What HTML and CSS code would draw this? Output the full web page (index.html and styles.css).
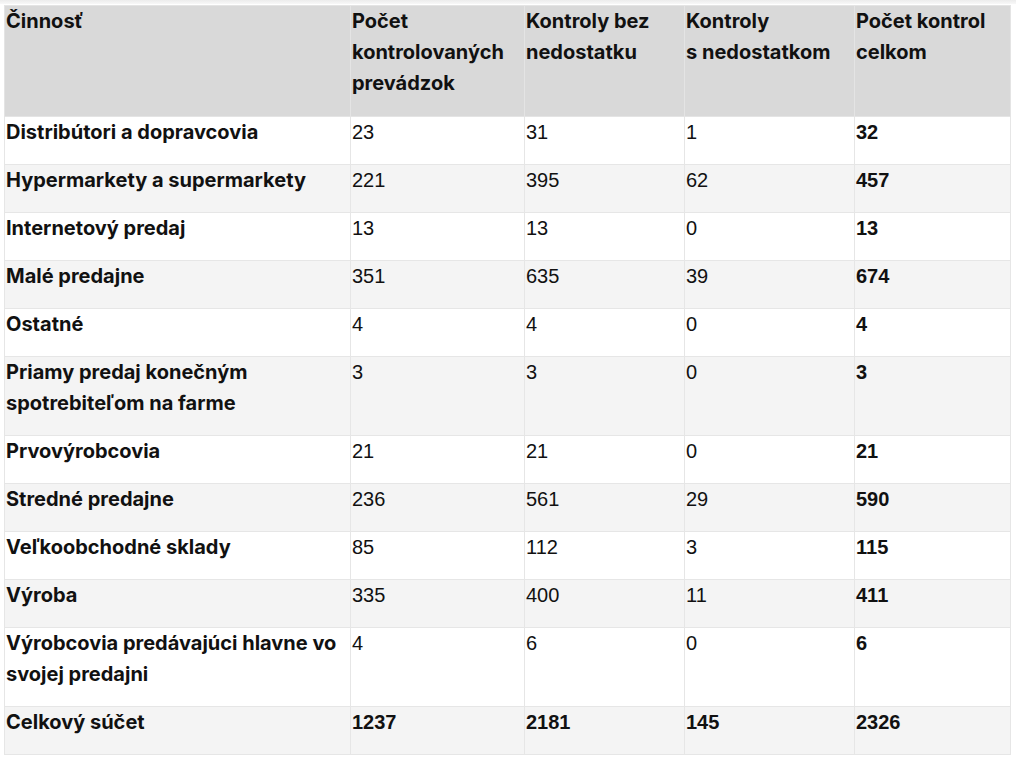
FILE: index.html
```html
<!DOCTYPE html>
<html lang="sk">
<head>
<meta charset="utf-8">
<title>Kontroly</title>
<link rel="stylesheet" href="styles.css">
</head>
<body>
<div class="topbar"></div>
<table class="data">
  <colgroup>
    <col class="c1"><col class="c2"><col class="c3"><col class="c4"><col class="c5">
  </colgroup>
  <thead>
    <tr>
      <th>Činnosť</th>
      <th>Počet kontrolovaných prevádzok</th>
      <th>Kontroly bez nedostatku</th>
      <th>Kontroly<br>s nedostatkom</th>
      <th>Počet kontrol celkom</th>
    </tr>
  </thead>
  <tbody>
    <tr><td class="lbl">Distribútori a dopravcovia</td><td>23</td><td>31</td><td>1</td><td class="tot">32</td></tr>
    <tr><td class="lbl">Hypermarkety a supermarkety</td><td>221</td><td>395</td><td>62</td><td class="tot">457</td></tr>
    <tr><td class="lbl">Internetový predaj</td><td>13</td><td>13</td><td>0</td><td class="tot">13</td></tr>
    <tr><td class="lbl">Malé predajne</td><td>351</td><td>635</td><td>39</td><td class="tot">674</td></tr>
    <tr><td class="lbl">Ostatné</td><td>4</td><td>4</td><td>0</td><td class="tot">4</td></tr>
    <tr><td class="lbl">Priamy predaj konečným spotrebiteľom na farme</td><td>3</td><td>3</td><td>0</td><td class="tot">3</td></tr>
    <tr><td class="lbl">Prvovýrobcovia</td><td>21</td><td>21</td><td>0</td><td class="tot">21</td></tr>
    <tr><td class="lbl">Stredné predajne</td><td>236</td><td>561</td><td>29</td><td class="tot">590</td></tr>
    <tr><td class="lbl">Veľkoobchodné sklady</td><td>85</td><td>112</td><td>3</td><td class="tot">115</td></tr>
    <tr><td class="lbl">Výroba</td><td>335</td><td>400</td><td>11</td><td class="tot">411</td></tr>
    <tr><td class="lbl">Výrobcovia predávajúci hlavne vo svojej predajni</td><td>4</td><td>6</td><td>0</td><td class="tot">6</td></tr>
    <tr class="sum"><td class="lbl">Celkový súčet</td><td>1237</td><td>2181</td><td>145</td><td>2326</td></tr>
  </tbody>
</table>
</body>
</html>
```
FILE: styles.css
```css
html, body {
  margin: 0;
  padding: 0;
  background: #ffffff;
}
body {
  padding: 5px 6px 0 4px;
}
.topbar {
  position: absolute;
  top: 0;
  left: 0;
  right: 0;
  height: 4px;
  background: linear-gradient(#ececec, #f8f8f8);
}
.data {
  border-collapse: collapse;
  table-layout: fixed;
  width: 1006px;
  font-family: "Liberation Sans", Arial, sans-serif;
  font-size: 20px;
  line-height: 31px;
  color: #111111;
}
.c1 { width: 346px; }
.c2 { width: 174px; }
.c3 { width: 160px; }
.c4 { width: 170px; }
.c5 { width: 156px; }
.data th, .data td {
  text-align: left;
  vertical-align: top;
  padding: 0 1px 16px 1px;
  border: 1px solid #e6e6e6;
}
.data th {
  background: #d9d9d9;
  font-family: "Inter", "Open Sans", sans-serif;
  font-weight: 700;
  font-size: 20px;
  padding-bottom: 17px;
  border-color: #e4e4e4;
}
.data tbody tr:nth-child(even) td {
  background: #f4f4f4;
}
.data td.lbl {
  font-family: "Inter", "Open Sans", sans-serif;
  font-weight: 700;
  font-size: 20px;
}
.data td.tot,
.data tr.sum td {
  font-weight: 700;
}
```
